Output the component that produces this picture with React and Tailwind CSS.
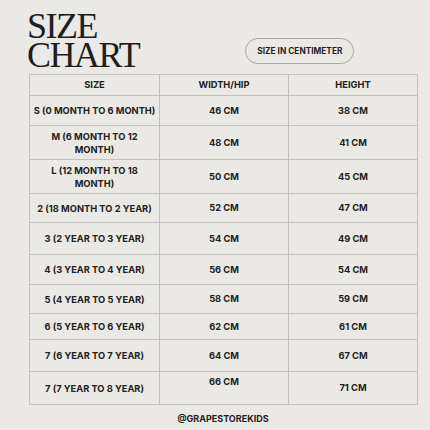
import React from 'react'

const rows = [
  { size: ['S (0 MONTH TO 6 MONTH)'], width: '46 CM', height: '38 CM', h: 'h-[30px]' },
  { size: ['M (6 MONTH TO 12', 'MONTH)'], width: '48 CM', height: '41 CM', h: 'h-[34px]' },
  { size: ['L (12 MONTH TO 18', 'MONTH)'], width: '50 CM', height: '45 CM', h: 'h-[34px]' },
  { size: ['2 (18 MONTH TO 2 YEAR)'], width: '52 CM', height: '47 CM', h: 'h-[29px]' },
  { size: ['3 (2 YEAR TO 3 YEAR)'], width: '54 CM', height: '49 CM', h: 'h-[32px]' },
  { size: ['4 (3 YEAR TO 4 YEAR)'], width: '56 CM', height: '54 CM', h: 'h-[30px]' },
  { size: ['5 (4 YEAR TO 5 YEAR)'], width: '58 CM', height: '59 CM', h: 'h-[29px]' },
  { size: ['6 (5 YEAR TO 6 YEAR)'], width: '62 CM', height: '61 CM', h: 'h-[26px]' },
  { size: ['7 (6 YEAR TO 7 YEAR)'], width: '64 CM', height: '67 CM', h: 'h-[32px]' },
  { size: ['7 (7 YEAR TO 8 YEAR)'], width: '66 CM', height: '71 CM', h: 'h-[33px]', topWidth: true },
]

export default function App() {
  return (
    <div className="w-[430px] h-[430px] bg-[#ebe9e5] text-[#222] font-['Inter','Liberation_Sans',sans-serif] overflow-hidden">
      {/* Heading */}
      <div className="flex items-end pl-[27px] h-[74px]">
        <h1 className="font-['Liberation_Serif',serif] text-[36px] tracking-[-1.5px] text-[#1e1e1e] pb-[4px]">
          <div className="h-[29px] leading-[29px]">SIZE</div>
          <div className="h-[29px] leading-[29px]">CHART</div>
        </h1>
        <div className="ml-[106px] mb-[10px] w-[109px] h-[26px] flex items-center justify-center rounded-full border border-[#a9a7a3] text-[8.3px] font-bold">
          SIZE IN CENTIMETER
        </div>
      </div>

      {/* Table */}
      <table className="ml-[29px] w-[388px] table-fixed border-collapse text-[9.3px] font-bold text-center">
        <colgroup>
          <col className="w-[130px]" />
          <col className="w-[129px]" />
          <col className="w-[129px]" />
        </colgroup>
        <thead>
          <tr className="h-[21px]">
            <th className="border-[1.5px] border-[#c4c2be] font-bold">SIZE</th>
            <th className="border-[1.5px] border-[#c4c2be] font-bold">WIDTH/HIP</th>
            <th className="border-[1.5px] border-[#c4c2be] font-bold">HEIGHT</th>
          </tr>
        </thead>
        <tbody>
          {rows.map((r, i) => (
            <tr key={i} className={r.h}>
              <td className="border-[1.5px] border-[#c4c2be] leading-[13px] whitespace-nowrap">
                {r.size.map((line, j) => (
                  <div key={j}>{line}</div>
                ))}
              </td>
              <td className={`border-[1.5px] border-[#c4c2be] ${r.topWidth ? 'align-top pt-[3px]' : ''}`}>{r.width}</td>
              <td className="border-[1.5px] border-[#c4c2be]">{r.height}</td>
            </tr>
          ))}
        </tbody>
      </table>

      <p className="ml-[29px] w-[388px] mt-[7px] text-center text-[9px] font-bold">@GRAPESTOREKIDS</p>
    </div>
  )
}
